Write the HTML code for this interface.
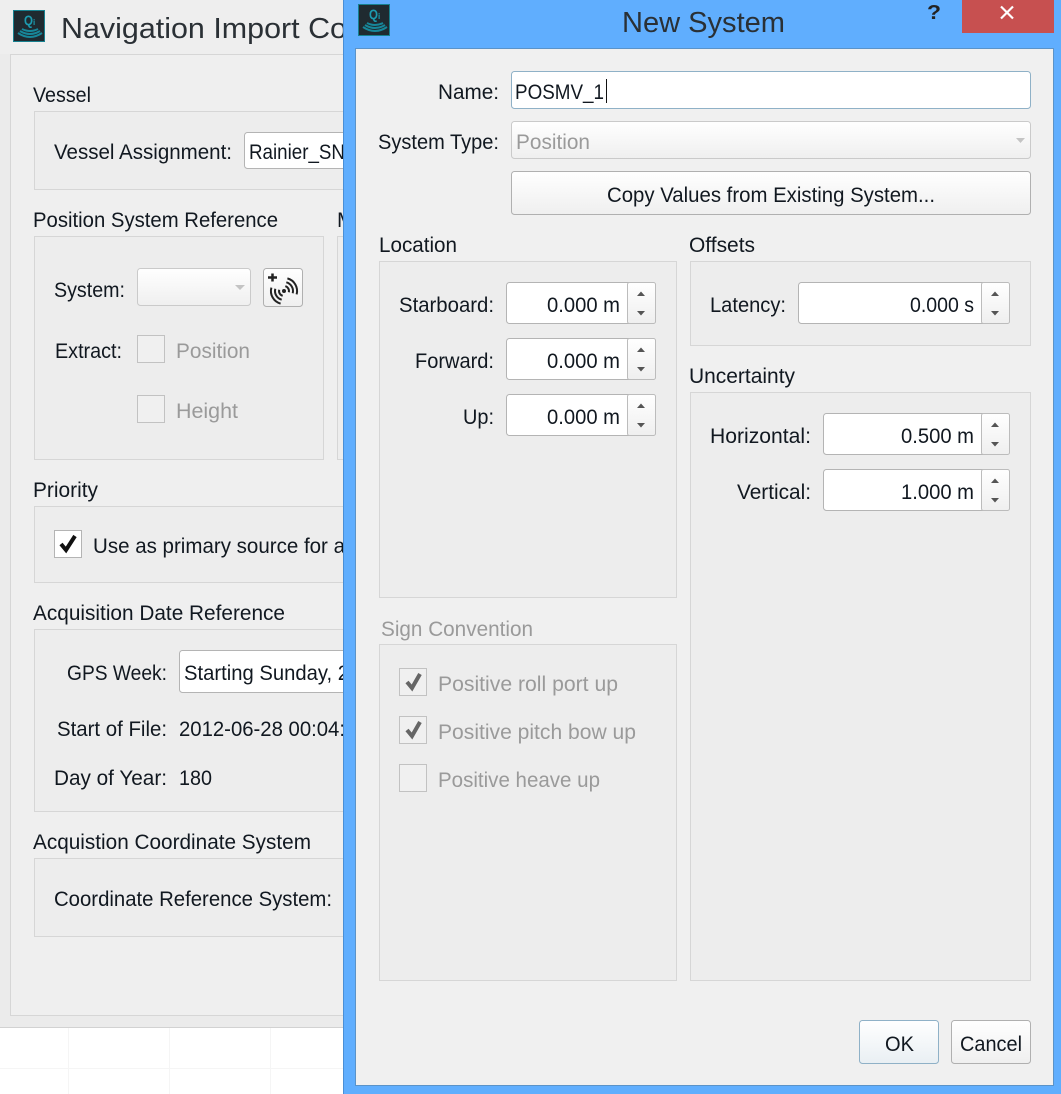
<!DOCTYPE html>
<html><head><meta charset="utf-8"><title>New System</title>
<style>
html,body{margin:0;padding:0;width:1061px;height:1094px;overflow:hidden;background:#fff}
svg{display:block}
text{font-family:"Liberation Sans",sans-serif;font-size:21px;fill:#111820}
.g{fill:#9a9a9a}
.grp{fill:#ededed;stroke:#d6d6d6;stroke-width:1}
.fld{fill:#fff;stroke:#b4b4b4;stroke-width:1}
.btn{fill:url(#b);stroke:#b0b0b0;stroke-width:1}
.dis{fill:url(#b);stroke:#cacaca;stroke-width:1}
.cbd{fill:#f0f0f0;stroke:#c2c2c2;stroke-width:1}
.spn{fill:url(#b);stroke:#bcbcbc;stroke-width:1}
.ar{fill:#555}
.chk{fill:none;stroke:#111;stroke-width:4}
.chkg{fill:none;stroke:#666;stroke-width:4}
.arc{fill:none;stroke:#17879a;stroke-width:2}
.sig{fill:none;stroke:#222;stroke-width:2}
</style></head><body>
<svg width="1061" height="1094" viewBox="0 0 1061 1094" xmlns="http://www.w3.org/2000/svg">
<defs>
<linearGradient id="b" x1="0" y1="0" x2="0" y2="1"><stop offset="0" stop-color="#fff"/><stop offset="1" stop-color="#efefef"/></linearGradient>
<linearGradient id="ok" x1="0" y1="0" x2="0" y2="1"><stop offset="0" stop-color="#fff"/><stop offset="1" stop-color="#e9eff3"/></linearGradient>
</defs>

<!-- background window -->
<rect width="1061" height="1094" fill="#fff"/>
<path d="M68.5 1028V1094M169.5 1028V1094M270.5 1028V1094M0 1068.5H343" stroke="#f5f5f5" fill="none"/>
<rect width="344" height="1027" fill="#ebebeb"/>
<rect y="1027" width="344" height="1" fill="#d2d2d2"/>
<rect width="344" height="54" fill="#eeeeee"/>
<rect x="10.5" y="54.5" width="345" height="961" fill="#efefef" stroke="#d6d6d6"/>

<rect x="13.5" y="10.5" width="31" height="31" fill="#1f2a30" stroke="#16808f"/>
<text x="24" y="25" textLength="9" lengthAdjust="spacingAndGlyphs" style="font-size:14px;font-weight:bold;fill:#1c9bb0">Q</text>
<text x="33" y="25" style="font-size:8px;font-weight:bold;fill:#1c9bb0">i</text>
<path class="arc" d="M22 29q8 4 16 0M20 31q10 6 20 0M18 33q12 8 24 0"/>
<text x="61" y="38" textLength="286" lengthAdjust="spacingAndGlyphs" style="font-size:29px;fill:#2a3035">Navigation Import Co</text>

<text x="33" y="102" textLength="58" lengthAdjust="spacingAndGlyphs">Vessel</text>
<rect class="grp" x="34.5" y="111.5" width="340" height="78"/>
<text x="54" y="159" textLength="178" lengthAdjust="spacingAndGlyphs">Vessel Assignment:</text>
<rect class="fld" x="244.5" y="132.5" width="140" height="36" rx="3"/>
<text x="249" y="159" textLength="96" lengthAdjust="spacingAndGlyphs">Rainier_SN</text>

<text x="33" y="227" textLength="245" lengthAdjust="spacingAndGlyphs">Position System Reference</text>
<text x="337" y="227">M</text>
<rect class="grp" x="34.5" y="236.5" width="289" height="223"/>
<rect class="grp" x="337.5" y="236.5" width="30" height="223"/>
<text x="54" y="297" textLength="71" lengthAdjust="spacingAndGlyphs">System:</text>
<rect class="dis" x="137.5" y="268.5" width="113" height="37" rx="3"/>
<path d="M235 285h10l-5 5z" fill="#c4c4c4"/>
<rect class="btn" x="263.5" y="268.5" width="39" height="38" rx="3"/>
<path d="M268 277.500h9M272.500 273.500v8" stroke="#222" stroke-width="2.500" fill="none"/>
<circle cx="284" cy="291" r="2" fill="#222"/>
<path class="sig" d="M285.300 286.200A5 5 0 0 1 288.800 292.300M286.300 282.300A9 9 0 0 1 292.700 293.300M287.400 278.400A13 13 0 0 1 296.600 294.400M282.700 295.800A5 5 0 0 1 279.200 289.700M281.700 299.700A9 9 0 0 1 275.300 288.700M280.600 303.600A13 13 0 0 1 271.400 287.600"/>
<text x="55" y="358" textLength="67" lengthAdjust="spacingAndGlyphs">Extract:</text>
<rect class="cbd" x="137.500" y="335.500" width="27" height="27"/>
<text class="g" x="176" y="358" textLength="74" lengthAdjust="spacingAndGlyphs">Position</text>
<rect class="cbd" x="137.500" y="395.500" width="27" height="27"/>
<text class="g" x="176" y="418" textLength="62" lengthAdjust="spacingAndGlyphs">Height</text>

<text x="33" y="497" textLength="65" lengthAdjust="spacingAndGlyphs">Priority</text>
<rect class="grp" x="34.5" y="506.5" width="340" height="76"/>
<rect x="54.500" y="530.500" width="27" height="27" fill="#fff" stroke="#b4b4b4"/>
<path class="chk" d="M61 544l5 6 9-14"/>
<text x="93" y="553" textLength="252" lengthAdjust="spacingAndGlyphs">Use as primary source for a</text>

<text x="33" y="620" textLength="252" lengthAdjust="spacingAndGlyphs">Acquisition Date Reference</text>
<rect class="grp" x="34.5" y="629.5" width="340" height="182"/>
<text x="67" y="680" textLength="100" lengthAdjust="spacingAndGlyphs">GPS Week:</text>
<rect class="fld" x="179.500" y="650.500" width="200" height="42" rx="3"/>
<text x="184" y="680" textLength="165" lengthAdjust="spacingAndGlyphs">Starting Sunday, 2</text>
<text x="57" y="736" textLength="110" lengthAdjust="spacingAndGlyphs">Start of File:</text>
<text x="179" y="736" textLength="166" lengthAdjust="spacingAndGlyphs">2012-06-28 00:04:</text>
<text x="54" y="785" textLength="113" lengthAdjust="spacingAndGlyphs">Day of Year:</text>
<text x="179" y="785" textLength="33" lengthAdjust="spacingAndGlyphs">180</text>

<text x="33" y="849" textLength="278" lengthAdjust="spacingAndGlyphs">Acquistion Coordinate System</text>
<rect class="grp" x="34.5" y="858.5" width="340" height="78"/>
<text x="54" y="906" textLength="278" lengthAdjust="spacingAndGlyphs">Coordinate Reference System:</text>

<!-- dialog -->
<rect x="343" y="0" width="718" height="1094" fill="#60aefe"/>
<rect x="343" y="0" width="1" height="1094" fill="#4a8fd6"/>
<rect x="355.500" y="48.500" width="698" height="1037" fill="#f0f0f0" stroke="#5b93c8"/>
<rect x="358.500" y="4.500" width="31" height="31" fill="#1f2a30" stroke="#16808f"/>
<text x="369" y="19" textLength="9" lengthAdjust="spacingAndGlyphs" style="font-size:14px;font-weight:bold;fill:#1c9bb0">Q</text>
<text x="378" y="19" style="font-size:8px;font-weight:bold;fill:#1c9bb0">i</text>
<path class="arc" d="M367 23q8 4 16 0M365 25q10 6 20 0M363 27q12 8 24 0"/>
<text x="622" y="32" textLength="163" lengthAdjust="spacingAndGlyphs" style="font-size:29px;fill:#2a3035">New System</text>
<text x="927" y="19" textLength="14" lengthAdjust="spacingAndGlyphs" style="font-size:20px;font-weight:bold;fill:#222">?</text>
<rect x="962" y="0" width="92" height="33" fill="#c75050"/>
<path d="M1001 6.500l12 12M1013 6.500l-12 12" stroke="#fff" stroke-width="2.200" fill="none"/>

<text x="438" y="99" textLength="61" lengthAdjust="spacingAndGlyphs">Name:</text>
<rect x="511.500" y="71.500" width="519" height="37" rx="3" fill="#fff" stroke="#8fb1c7"/>
<text x="515" y="99" textLength="89" lengthAdjust="spacingAndGlyphs">POSMV_1</text>
<rect x="606" y="79" width="1" height="24" fill="#111"/>
<text x="378" y="149" textLength="121" lengthAdjust="spacingAndGlyphs">System Type:</text>
<rect class="dis" x="511.500" y="121.500" width="519" height="37" rx="3"/>
<text class="g" x="516" y="149" textLength="74" lengthAdjust="spacingAndGlyphs">Position</text>
<path d="M1016 138h9l-4.500 5z" fill="#c4c4c4"/>
<rect class="btn" x="511.500" y="171.500" width="519" height="43" rx="3"/>
<text x="607" y="202" textLength="328" lengthAdjust="spacingAndGlyphs">Copy Values from Existing System...</text>

<text x="379" y="252" textLength="78" lengthAdjust="spacingAndGlyphs">Location</text>
<rect class="grp" x="379.500" y="261.500" width="297" height="336"/>
<text x="399" y="312" textLength="95" lengthAdjust="spacingAndGlyphs">Starboard:</text>
<text x="415" y="368" textLength="79" lengthAdjust="spacingAndGlyphs">Forward:</text>
<text x="463" y="424" textLength="31" lengthAdjust="spacingAndGlyphs">Up:</text>

<rect class="fld" x="506.500" y="282.500" width="149" height="41" rx="3"/><rect class="spn" x="627.500" y="282.500" width="28" height="41" rx="2"/>
<path class="ar" d="M637 296h8l-4-4.500zM637 311h8l-4 4.500z"/>
<text x="547" y="312" textLength="73" lengthAdjust="spacingAndGlyphs">0.000 m</text>
<rect class="fld" x="506.500" y="338.500" width="149" height="41" rx="3"/><rect class="spn" x="627.500" y="338.500" width="28" height="41" rx="2"/>
<path class="ar" d="M637 352h8l-4-4.500zM637 367h8l-4 4.500z"/>
<text x="547" y="368" textLength="73" lengthAdjust="spacingAndGlyphs">0.000 m</text>
<rect class="fld" x="506.500" y="394.500" width="149" height="41" rx="3"/><rect class="spn" x="627.500" y="394.500" width="28" height="41" rx="2"/>
<path class="ar" d="M637 408h8l-4-4.500zM637 423h8l-4 4.500z"/>
<text x="547" y="424" textLength="73" lengthAdjust="spacingAndGlyphs">0.000 m</text>

<text x="689" y="252" textLength="66" lengthAdjust="spacingAndGlyphs">Offsets</text>
<rect class="grp" x="690.500" y="261.500" width="340" height="84"/>
<text x="710" y="312" textLength="76" lengthAdjust="spacingAndGlyphs">Latency:</text>
<rect class="fld" x="798.500" y="282.500" width="211" height="41" rx="3"/><rect class="spn" x="981.500" y="282.500" width="28" height="41" rx="2"/>
<path class="ar" d="M991 296h8l-4-4.500zM991 311h8l-4 4.500z"/>
<text x="910" y="312" textLength="64" lengthAdjust="spacingAndGlyphs">0.000 s</text>

<text x="689" y="383" textLength="106" lengthAdjust="spacingAndGlyphs">Uncertainty</text>
<rect class="grp" x="690.500" y="392.500" width="340" height="588"/>
<text x="710" y="443" textLength="101" lengthAdjust="spacingAndGlyphs">Horizontal:</text>
<rect class="fld" x="823.500" y="413.500" width="186" height="41" rx="3"/><rect class="spn" x="981.500" y="413.500" width="28" height="41" rx="2"/>
<path class="ar" d="M991 427h8l-4-4.500zM991 442h8l-4 4.500z"/>
<text x="901" y="443" textLength="73" lengthAdjust="spacingAndGlyphs">0.500 m</text>
<text x="737" y="499" textLength="74" lengthAdjust="spacingAndGlyphs">Vertical:</text>
<rect class="fld" x="823.500" y="469.500" width="186" height="41" rx="3"/><rect class="spn" x="981.500" y="469.500" width="28" height="41" rx="2"/>
<path class="ar" d="M991 483h8l-4-4.500zM991 498h8l-4 4.500z"/>
<text x="901" y="499" textLength="73" lengthAdjust="spacingAndGlyphs">1.000 m</text>

<text class="g" x="381" y="636" textLength="152" lengthAdjust="spacingAndGlyphs">Sign Convention</text>
<rect class="grp" x="379.500" y="644.500" width="297" height="336"/>
<rect class="cbd" x="399.500" y="668.500" width="27" height="27"/>
<path class="chkg" d="M407 682l5 6 8-14"/>
<text class="g" x="438" y="691" textLength="180" lengthAdjust="spacingAndGlyphs">Positive roll port up</text>
<rect class="cbd" x="399.500" y="716.500" width="27" height="27"/>
<path class="chkg" d="M407 730l5 6 8-14"/>
<text class="g" x="438" y="739" textLength="198" lengthAdjust="spacingAndGlyphs">Positive pitch bow up</text>
<rect class="cbd" x="399.500" y="764.500" width="27" height="27"/>
<text class="g" x="438" y="787" textLength="162" lengthAdjust="spacingAndGlyphs">Positive heave up</text>

<rect x="859.500" y="1020.500" width="79" height="43" rx="3" fill="url(#ok)" stroke="#8fb1c7"/>
<text x="885" y="1051" textLength="29" lengthAdjust="spacingAndGlyphs">OK</text>
<rect class="btn" x="951.500" y="1020.500" width="79" height="43" rx="3"/>
<text x="960" y="1051" textLength="62" lengthAdjust="spacingAndGlyphs">Cancel</text>
</svg>
</body></html>
